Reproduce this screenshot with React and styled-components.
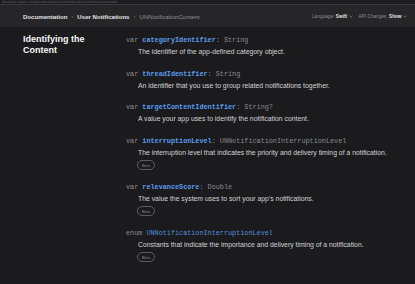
import React from "react";
import styled, { createGlobalStyle } from "styled-components";

const GlobalStyle = createGlobalStyle`
  html, body {
    margin: 0;
    padding: 0;
    background: #1b1b1d;
  }
  body {
    font-family: "Liberation Sans", Arial, sans-serif;
    -webkit-font-smoothing: antialiased;
  }
`;

const Page = styled.div`
  width: 415px;
  height: 284px;
  overflow: hidden;
  background: #1b1b1d;
`;

const UrlStrip = styled.div`
  height: 4px;
  overflow: hidden;
  background: #1c1c1e;
  border-bottom: 1px solid #3a3a3d;
  padding-left: 2px;
  font-size: 3.5px;
  line-height: 4px;
  color: #5e5e63;
  white-space: nowrap;
`;

const NavBar = styled.div`
  height: 22px;
  display: flex;
  align-items: center;
  justify-content: space-between;
  padding: 0 8px 0 23px;
  background: #262628;
`;

const Crumbs = styled.div`
  display: flex;
  align-items: center;
  gap: 4px;
  font-size: 6.1px;
  white-space: nowrap;
`;

const Crumb = styled.span`
  color: ${(p) => (p.$current ? "#8e8e93" : "#e3e3e6")};
  font-weight: ${(p) => (p.$current ? 400 : 600)};
`;

const Sep = styled.span`
  color: #7a7a7f;
  font-size: 6px;
`;

const Options = styled.div`
  display: flex;
  align-items: center;
  gap: 6px;
  font-size: 4.7px;
  white-space: nowrap;
`;

const Option = styled.span`
  display: flex;
  align-items: center;
  gap: 1.5px;
  color: #8e8e93;
`;

const OptionValue = styled.span`
  color: #e3e3e6;
  font-weight: 700;
`;

const Chevron = () => (
  <svg width="4" height="3" viewBox="0 0 4 3">
    <path d="M0.5 0.8 L2 2.2 L3.5 0.8" fill="none" stroke="#8e8e93" strokeWidth="0.6" />
  </svg>
);

const Content = styled.div`
  display: grid;
  grid-template-columns: 103px 1fr;
  padding: 7px 0 0 23px;
`;

const Heading = styled.h2`
  margin: 0;
  font-size: 9px;
  line-height: 11px;
  font-weight: 700;
  color: #f5f5f7;
`;

const Topics = styled.div`
  display: flex;
  flex-direction: column;
  gap: 9.5px;
`;

const Topic = styled.div`
  display: flex;
  flex-direction: column;
`;

const Decl = styled.div`
  font-family: "Liberation Mono", "Courier New", monospace;
  font-size: 6.8px;
  line-height: 12px;
  color: #8a8a8f;
  white-space: nowrap;
`;

const Ident = styled.span`
  color: ${(p) => (p.$type ? "#4f8fda" : "#5a9cf0")};
  font-weight: ${(p) => (p.$type ? 400 : 700)};
`;

const Abstract = styled.div`
  padding-left: 12px;
  font-size: 6.85px;
  line-height: 12px;
  color: #d2d2d7;
  white-space: nowrap;
`;

const Badge = styled.span`
  align-self: flex-start;
  margin: 1.5px 0 1px 11px;
  height: 8px;
  width: 16px;
  border: 1px solid #5d5d62;
  border-radius: 5px;
  display: flex;
  align-items: center;
  justify-content: center;
  font-size: 4px;
  color: #8e8e93;
`;

const topics = [
  {
    kind: "var",
    name: "categoryIdentifier",
    type: ": String",
    text: "The identifier of the app-defined category object.",
  },
  {
    kind: "var",
    name: "threadIdentifier",
    type: ": String",
    text: "An identifier that you use to group related notifications together.",
  },
  {
    kind: "var",
    name: "targetContentIdentifier",
    type: ": String?",
    text: "A value your app uses to identify the notification content.",
  },
  {
    kind: "var",
    name: "interruptionLevel",
    type: ": UNNotificationInterruptionLevel",
    text: "The interruption level that indicates the priority and delivery timing of a notification.",
    beta: true,
  },
  {
    kind: "var",
    name: "relevanceScore",
    type: ": Double",
    text: "The value the system uses to sort your app\u2019s notifications.",
    beta: true,
  },
  {
    kind: "enum",
    name: "UNNotificationInterruptionLevel",
    type: "",
    isType: true,
    text: "Constants that indicate the importance and delivery timing of a notification.",
    beta: true,
  },
];

export default function App() {
  return (
    <Page>
      <GlobalStyle />
      <UrlStrip>developer.apple.com/documentation/usernotifications/unnotificationcontent</UrlStrip>
      <NavBar>
        <Crumbs>
          <Crumb>Documentation</Crumb>
          <Sep>›</Sep>
          <Crumb>User Notifications</Crumb>
          <Sep>›</Sep>
          <Crumb $current>UNNotificationContent</Crumb>
        </Crumbs>
        <Options>
          <Option>
            Language: <OptionValue>Swift</OptionValue>
            <Chevron />
          </Option>
          <Option>
            API Changes: <OptionValue>Show</OptionValue>
            <Chevron />
          </Option>
        </Options>
      </NavBar>
      <Content>
        <Heading>
          Identifying the
          <br />
          Content
        </Heading>
        <Topics>
          {topics.map((t) => (
            <Topic key={t.name}>
              <Decl>
                {t.kind} <Ident $type={t.isType}>{t.name}</Ident>
                {t.type}
              </Decl>
              <Abstract>{t.text}</Abstract>
              {t.beta && <Badge>Beta</Badge>}
            </Topic>
          ))}
        </Topics>
      </Content>
    </Page>
  );
}
